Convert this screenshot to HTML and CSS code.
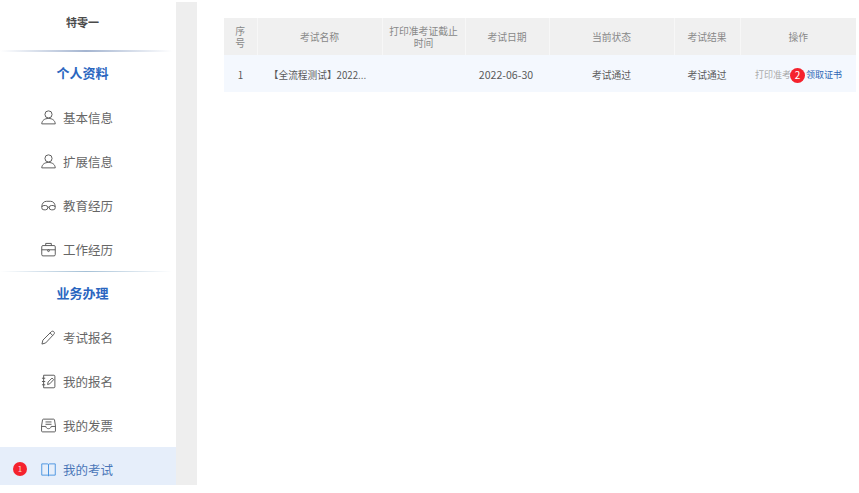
FILE: index.html
```html
<!DOCTYPE html>
<html lang="zh-CN">
<head>
<meta charset="utf-8">
<title>我的考试</title>
<link rel="stylesheet" href="styles.css">
</head>
<body>
<div class="app">
  <aside class="sidebar">
    <div class="user">特零一</div>
    <div class="group">
      <div class="group-title">个人资料</div>
      <a class="item"><svg class="icon" viewBox="0 0 16 16"><circle cx="8" cy="4.700" r="3.800"/><path d="M.8 14.800c.2-3.600 3-5.800 7.200-5.800s7 2.200 7.200 5.800z"/></svg>基本信息</a>
      <a class="item"><svg class="icon" viewBox="0 0 16 16"><circle cx="8" cy="4.700" r="3.800"/><path d="M.8 14.800c.2-3.600 3-5.800 7.200-5.800s7 2.200 7.200 5.800z"/></svg>扩展信息</a>
      <a class="item"><svg class="icon" viewBox="0 0 16 16"><path d="M.8 9.500C1 5.500 3 3.500 6 3.500h4c3 0 5 2 5.200 6"/><rect x=".8" y="8" width="6.400" height="4.600" rx="2.300"/><rect x="8.800" y="8" width="6.400" height="4.600" rx="2.300"/><path d="M7.200 9.800h1.600"/></svg>教育经历</a>
      <a class="item"><svg class="icon" viewBox="0 0 16 16"><rect x=".8" y="3.800" width="14.400" height="11" rx="1.300"/><path d="M5 3.800V1.500h6v2.300M.8 8.300h14.400"/><circle cx="8" cy="9.200" r="1"/></svg>工作经历</a>
    </div>
    <div class="group group-second">
      <div class="group-title">业务办理</div>
      <a class="item"><svg class="icon" viewBox="0 0 16 16"><path d="M1 15 2 10.800 11 1.800c.8-.7 1.900-.7 2.700 0 .8.800.8 1.900 0 2.700L5 13.800z"/><path d="M9.700 3.100 12.500 5.900"/></svg>考试报名</a>
      <a class="item"><svg class="icon" viewBox="0 0 16 16"><path d="M2.800 1.300h11c.6 0 1 .4 1 1v11.400c0 .6-.4 1-1 1h-11zM1 4.500h3.500M1 8h3.500M1 11.500h3.500"/><path d="M7 11.200 7.600 8.500 11.800 4.300 13.500 6 9.300 10.500z"/></svg>我的报名</a>
      <a class="item"><svg class="icon" viewBox="0 0 16 16"><path d="M2.600 1.200h10.800c.5 0 .9.300 1 .8l1 6.500v5.300c0 .6-.4 1-1 1H1.600c-.6 0-1-.4-1-1V8.500l1-6.500c.1-.5.500-.8 1-.8z"/><path d="M.8 9h4.400c.2 1.500 1.300 2.400 2.800 2.400s2.600-.9 2.800-2.400h4.400M4.800 4.200h6.400M4.800 6.700h6.400"/></svg>我的发票</a>
      <a class="item item-active"><span class="dot">1</span><svg class="icon" viewBox="0 0 16 16"><path d="M.8 2h6.200c.6 0 1 .4 1 1v12c0-.6-.4-1-1-1H.8zM15.200 2H9c-.6 0-1 .4-1 1v12c0-.6.4-1 1-1h6.200z"/></svg>我的考试</a>
    </div>
  </aside>
  <div class="gutter"></div>
  <main class="main">
    <table class="table">
      <colgroup>
        <col class="c1"><col class="c2"><col class="c3"><col class="c4"><col class="c5"><col class="c6"><col class="c7">
      </colgroup>
      <thead>
        <tr>
          <th>序号</th>
          <th>考试名称</th>
          <th>打印准考证截止时间</th>
          <th>考试日期</th>
          <th>当前状态</th>
          <th>考试结果</th>
          <th>操作</th>
        </tr>
      </thead>
      <tbody>
        <tr>
          <td>1</td>
          <td class="name">【全流程测试】2022...</td>
          <td></td>
          <td class="date">2022-06-30</td>
          <td>考试通过</td>
          <td>考试通过</td>
          <td class="ops"><span class="disabled">打印准考</span><span class="count">2</span><a class="link">领取证书</a></td>
        </tr>
      </tbody>
    </table>
  </main>
</div>
</body>
</html>
```
FILE: styles.css
```css
* { box-sizing: border-box; }
html, body { margin: 0; padding: 0; height: 100%; overflow: hidden; background: #fff; }
body { font-family: "Noto Sans CJK SC", "Liberation Sans", sans-serif; color: #555; }
.app { display: flex; height: 485px; }
.sidebar { width: 176px; flex: none; background: #fff; display: flex; flex-direction: column; }
.user { height: 51px; flex: none; display: flex; align-items: center; justify-content: center; font-size: 11px; font-weight: 700; color: #4a4a4a; padding: 0 11px 7px 0; }
.group { position: relative; display: flex; flex-direction: column; flex: none; }
.group::before { content: ""; position: absolute; left: 0; top: -1px; width: 172px; height: 2px; background: linear-gradient(90deg, rgba(90,120,170,0), rgba(90,120,170,.55) 50%, rgba(90,120,170,0)); }
.group-second::before { height: 1px; top: 0; background: linear-gradient(90deg, rgba(90,140,180,0), rgba(90,140,180,.55) 50%, rgba(90,140,180,0)); }
.group-title { height: 44px; display: flex; align-items: center; justify-content: center; font-size: 13px; font-weight: 700; color: #2a66bf; padding: 0 11px 2px 0; }
.item { position: relative; height: 44px; display: flex; align-items: center; padding-left: 41px; font-size: 12.500px; color: #666; }
.icon { width: 15px; height: 15px; margin-right: 7px; fill: none; stroke: #555; stroke-width: 1; flex: none; }
.item-active { height: 38px; padding-top: 6px; background: #e6eefa; color: #4a76b8; }
.item-active .icon { stroke: #4a94e0; }
.dot { position: absolute; left: 13px; top: 15px; width: 14px; height: 14px; border-radius: 50%; background: #f5222d; color: #fbd0d0; font-size: 8px; line-height: 13px; text-align: center; }
.gutter { width: 21px; flex: none; background: #eeeeee; margin-top: 2px; }
.main { flex: 1; padding: 18px 3px 0 27px; min-width: 0; }
.table { width: 632px; border-collapse: collapse; table-layout: fixed; font-size: 9.800px; }
.c1 { width: 33px; } .c2 { width: 125px; } .c3 { width: 83px; } .c4 { width: 84px; } .c5 { width: 125px; } .c6 { width: 66px; } .c7 { width: 116px; }
th { height: 37px; padding: 0 5px; background: #f0f0f0; border-left: 1px solid #f7f7f7; font-weight: 400; color: #888; line-height: 12px; text-align: center; }
th:first-child { border-left: 0; padding: 0 8px; }
td { height: 37px; padding: 2px 0 0; background: #f4f8fe; color: #5a5a5a; text-align: center; white-space: nowrap; }
.name { font-size: 9.700px; padding-right: 4px; }
.date { font-size: 10.600px; padding-right: 2px; }
.ops { position: relative; text-align: left; padding-left: 15px; font-size: 9px; }
.disabled { color: #aaa; }
.count { position: absolute; left: 50px; top: 13px; width: 15px; height: 15px; border-radius: 50%; background: #f5222d; color: #fff; font-size: 10px; line-height: 14px; text-align: center; }
.link { position: absolute; left: 66px; top: 13px; line-height: 14px; color: #2f66b5; }
```
